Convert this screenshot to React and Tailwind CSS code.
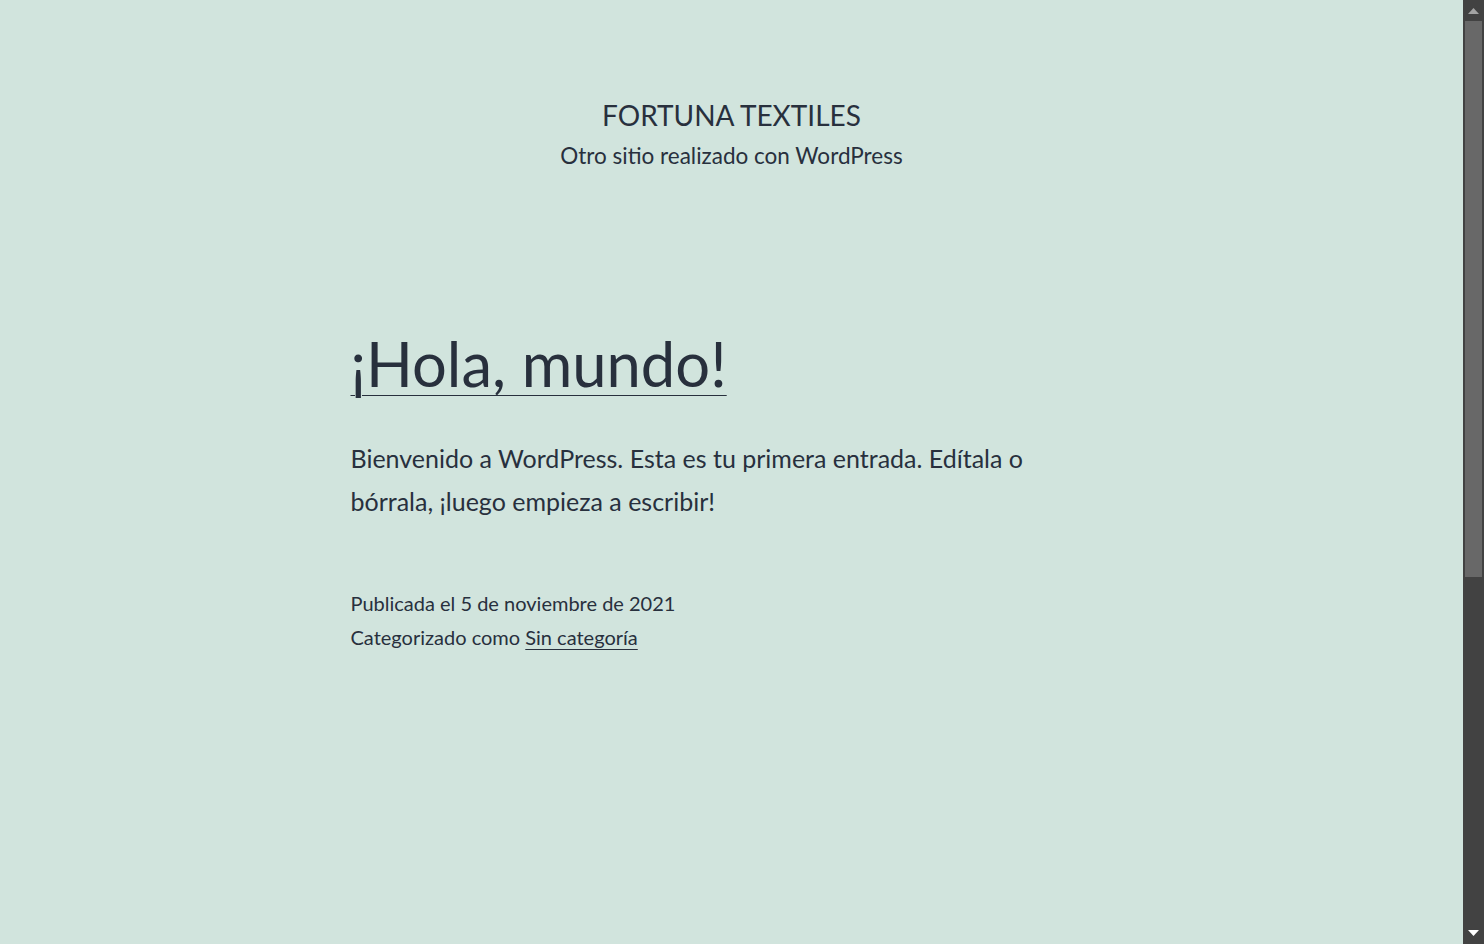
export default function App() {
  return (
    <div className="flex h-screen w-full overflow-hidden bg-[#d1e4dd] text-[#28303d] [font-family:Lato,'Open_Sans',sans-serif]">
      <main className="flex-1 min-w-0">
        <header className="flex flex-col items-center pt-[97px]">
          <p className="text-[28px] leading-[36px] uppercase">Fortuna Textiles</p>
          <p className="mt-[8px] text-[22.5px] leading-[30px]">Otro sitio realizado con WordPress</p>
        </header>
        <article className="mx-auto w-[762px] pt-[156px]">
          <h2 className="text-[61.5px] leading-[72px] font-normal">
            <a href="#" className="underline decoration-1 underline-offset-[8px]">¡Hola, mundo!</a>
          </h2>
          <p className="mt-[38px] max-w-[740px] text-[25px] leading-[43px]">
            Bienvenido a WordPress. Esta es tu primera entrada. Edítala o bórrala, ¡luego empieza a escribir!
          </p>
          <footer className="mt-[63px] text-[20px] leading-[34px]">
            <p>Publicada el 5 de noviembre de 2021</p>
            <p>
              Categorizado como{" "}
              <a href="#" className="underline decoration-1 underline-offset-[4px]">Sin categoría</a>
            </p>
          </footer>
        </article>
      </main>
      <aside className="relative w-[21px] shrink-0 bg-[#424242]">
        <svg className="absolute left-[5px] top-[8px]" width="11" height="7" viewBox="0 0 11 7">
          <polygon points="5.5,0 11,6 0,6" fill="#a3a3a3" />
        </svg>
        <div className="absolute left-[2px] right-[2px] top-[21px] h-[556px] bg-[#686868]"></div>
        <svg className="absolute left-[5px] bottom-[8px]" width="11" height="7" viewBox="0 0 11 7">
          <polygon points="0,1 11,1 5.5,7" fill="#ffffff" />
        </svg>
      </aside>
    </div>
  );
}
